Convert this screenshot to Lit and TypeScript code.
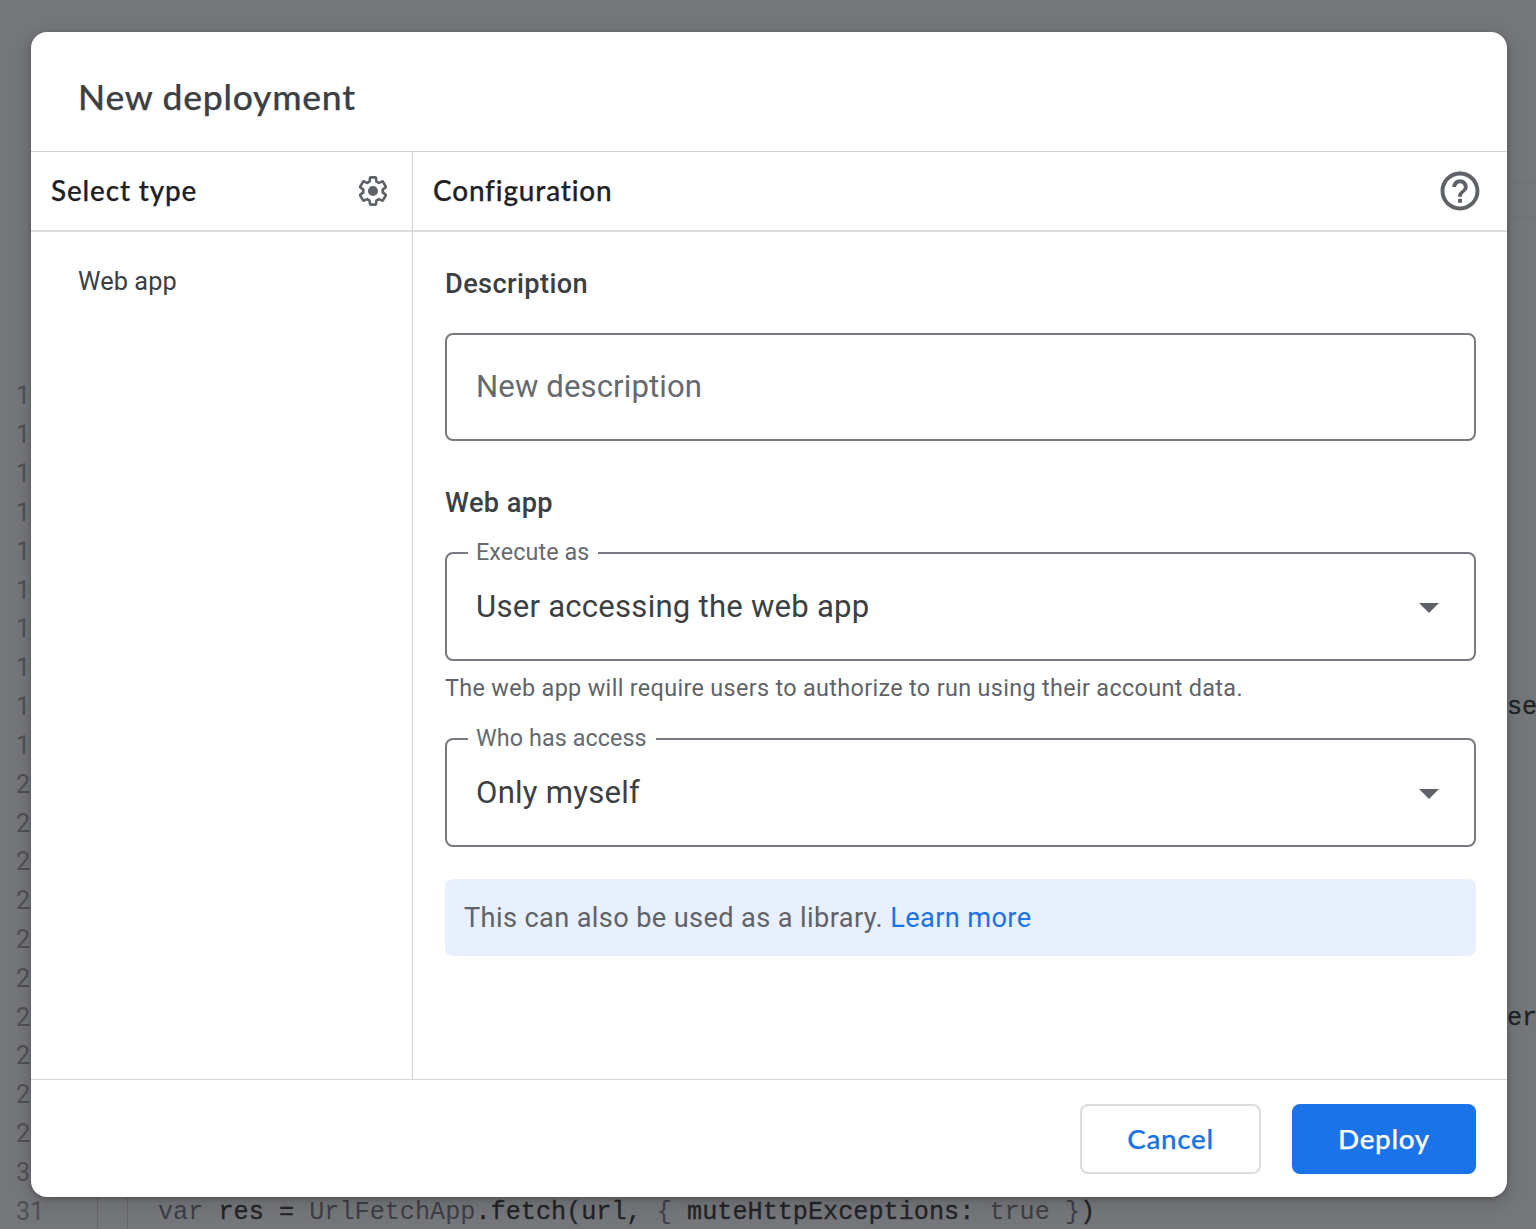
import { LitElement, html, css } from "lit";
import { customElement, property } from "lit/decorators.js";

const LINE_NUMBERS = Array.from({ length: 22 }, (_, i) => 10 + i);

@customElement("code-backdrop")
class CodeBackdrop extends LitElement {
  static styles = css`
    :host { display: block; height: 100%; background: #757679; color: #222327; overflow: hidden; }
    .editor { position: relative; height: 100%; box-sizing: border-box; padding-top: 377.4px; }
    .num { height: 38.84px; line-height: 38.84px; padding-left: 16px; font-family: Roboto, sans-serif; font-size: 25px; color: #4f5054; }
    .line { position: absolute; left: 158px; top: 1193px; white-space: pre; }
    .line, .frag { font-family: "Liberation Mono", monospace; font-size: 25.2px; line-height: 39px; -webkit-text-stroke: 0.3px currentColor; }
    .frag { position: absolute; left: 1507px; }
    .one { top: 688px; }
    .two { top: 999px; }
    .dim { color: #3d3e46; -webkit-text-stroke: 0; }
    .guide { position: absolute; top: 1190px; width: 1px; height: 39px; background: #66676b; }
    .g1 { left: 97px; }
    .g2 { left: 127px; }
    .bar { position: absolute; right: 0; top: 182px; width: 40px; height: 34px; border: solid #707175; border-width: 1px 0; }
  `;
  render() {
    return html`<div class="editor">
      ${LINE_NUMBERS.map((n) => html`<div class="num">${n}</div>`)}
      <div class="bar"></div>
      <div class="guide g1"></div><div class="guide g2"></div>
      <div class="frag one">se</div><div class="frag two">er</div>
      <div class="line"><span class="dim">var</span> res = <span class="dim">UrlFetchApp</span>.fetch(url, <span class="dim">{</span> muteHttpExceptions: <span class="dim">true }</span>)</div>
    </div>`;
  }
}

@customElement("outlined-select")
class OutlinedSelect extends LitElement {
  @property() label = "";
  @property() value = "";
  static styles = css`
    :host { display: block; }
    .box { margin: 0; padding: 0 35px 0 21px; height: 120px; box-sizing: border-box; border: 2px solid #777a80; border-radius: 8px; min-width: 0; }
    .label { padding: 0 9px 0 8px; height: 24px; line-height: 22px; font-size: 23.3px; letter-spacing: 0.1px; color: #66696e; }
    .row { display: flex; align-items: center; justify-content: space-between; height: 83px; padding-left: 8px; }
    .row svg { margin-top: 3px; }
    .value { font-size: 31.1px; line-height: 40px; letter-spacing: 0.24px; color: #3c4043; }
  `;
  render() {
    return html`<fieldset class="box">
      <legend class="label">${this.label}</legend>
      <div class="row"><span class="value">${this.value}</span>
        <svg width="20" height="10" viewBox="0 0 20 10"><path d="M0 0H20L10 10Z" fill="#5f6368"/></svg>
      </div>
    </fieldset>`;
  }
}

@customElement("app-root")
class AppRoot extends LitElement {
  static styles = css`
    :host { display: block; width: 1536px; height: 1229px; position: relative; overflow: hidden; font-family: Roboto, sans-serif; }
    .modal { position: absolute; left: 31px; top: 32px; width: 1476px; height: 1165px; background: #fff; border-radius: 16px; overflow: hidden; display: flex; flex-direction: column; }
    .shadow { position: absolute; left: 31px; top: 32px; width: 1476px; height: 1165px; border-radius: 16px; box-shadow: 0 2px 5px rgba(0,0,0,.2), 0 5px 18px 2px rgba(0,0,0,.13); }
    .g { font-family: "Google Sans", Lato, sans-serif; font-weight: 500; -webkit-text-stroke: 0.25px currentColor; }
    .title { height: 120px; box-sizing: border-box; padding: 41px 0 0 47px; font-size: 35.5px; line-height: 48px; letter-spacing: 0.75px; color: #3c4043; border-bottom: 1px solid #cdd0d5; margin: 0; flex: none; }
    .main { flex: 1; display: flex; min-height: 0; }
    .side { width: 382px; box-sizing: border-box; border-right: 1px solid #cdd0d5; }
    .config { flex: 1; }
    .bar { height: 80px; box-sizing: border-box; border-bottom: 2px solid #dadce0; display: flex; align-items: center; justify-content: space-between; font-size: 27.9px; letter-spacing: 0.85px; color: #202124; }
    .bar span { padding-bottom: 2px; }
    .side .bar { padding: 0 22px 0 20px; }
    .config .bar { padding: 0 27px 0 20px; }
    .item { padding: 34px 0 0 47px; font-size: 25.3px; line-height: 32px; letter-spacing: 0.1px; color: #3c4043; }
    .body { padding: 34px 31px 0 32px; display: flex; flex-direction: column; }
    .head { font-weight: 500; font-size: 27.2px; line-height: 36px; letter-spacing: 0.38px; color: #3c4043; }
    .input { height: 108px; margin: 31px 0 44px; box-sizing: border-box; border: 2px solid #777a80; border-radius: 8px; padding: 0 29px 2px; display: flex; align-items: center; font-size: 31.1px; letter-spacing: 0.12px; color: #66696e; }
    .first { margin-top: 20px; }
    .hint { margin: 11px 0 23px; font-size: 23.4px; line-height: 32px; letter-spacing: 0.33px; color: #5f6368; }
    .note { margin-top: 32px; height: 77px; border-radius: 8px; background: #e8effd; padding: 0 19px; display: flex; align-items: center; font-size: 27.2px; letter-spacing: 0.37px; color: #5f6368; white-space: pre; }
    .link { color: #1a73e8; }
    .foot { height: 118px; flex: none; box-sizing: border-box; border-top: 1px solid #d4d6da; padding: 24px 31px 0 0; display: flex; justify-content: flex-end; gap: 31px; }
    .btn { height: 70px; box-sizing: border-box; border-radius: 8px; display: flex; align-items: center; justify-content: center; font-size: 27.8px; letter-spacing: 0.7px; padding-bottom: 2px; }
    .cancel { width: 181px; border: 2px solid #dadce0; color: #1a73e8; }
    .deploy { width: 184px; background: #1a73e8; color: #fff; }
    svg { display: block; }
  `;
  render() {
    return html`
      <code-backdrop></code-backdrop>
      <div class="shadow"></div>
      <section class="modal">
        <h1 class="title g">New deployment</h1>
        <div class="main">
          <div class="side">
            <div class="bar g"><span>Select type</span>
              <svg width="34" height="34" viewBox="-0.45 -0.45 24.9 24.9" fill="none" stroke="#5f6368" stroke-width="1.95" stroke-linejoin="round">
                <path d="M19.1 12.98c.04-.32.07-.64.07-.98s-.03-.66-.07-.98l2.11-1.65c.19-.15.24-.42.12-.64l-2-3.46c-.12-.22-.39-.3-.61-.22l-2.49 1c-.52-.4-1.08-.73-1.69-.98l-.38-2.65C14.13 2.18 13.92 2 13.67 2h-3.34c-.25 0-.46.18-.49.42l-.38 2.65c-.61.25-1.17.59-1.69.98l-2.49-1c-.23-.09-.49 0-.61.22l-2 3.46c-.13.22-.07.49.12.64l2.11 1.65c-.04.32-.07.65-.07.98s.03.66.07.98l-2.11 1.65c-.19.15-.24.42-.12.64l2 3.46c.12.22.39.3.61.22l2.49-1c.52.4 1.08.73 1.69.98l.38 2.65c.03.24.24.42.49.42h3.34c.25 0 .46-.18.49-.42l.38-2.65c.61-.25 1.17-.59 1.69-.98l2.49 1c.23.09.49 0 .61-.22l2-3.46c.12-.22.07-.49-.12-.64z"/>
                <circle cx="12" cy="12" r="3.7" fill="#5f6368" stroke="none"/>
              </svg>
            </div>
            <div class="item">Web app</div>
          </div>
          <div class="config">
            <div class="bar g"><span>Configuration</span>
              <svg width="40" height="40" viewBox="1.7 1.7 20.6 20.6" fill="#5f6368"><path stroke="none" d="M11 18h2v-2h-2v2zm1-16C6.48 2 2 6.48 2 12s4.48 10 10 10 10-4.48 10-10S17.52 2 12 2zm0 18c-4.41 0-8-3.59-8-8s3.59-8 8-8 8 3.59 8 8-3.59 8-8 8zm0-14c-2.21 0-4 1.79-4 4h2c0-1.1.9-2 2-2s2 .9 2 2c0 2-3 1.75-3 5h2c0-2.25 3-2.5 3-5 0-2.21-1.79-4-4-4z"/></svg>
            </div>
            <div class="body">
              <div class="head">Description</div>
              <div class="input">New description</div>
              <div class="head">Web app</div>
              <outlined-select class="first" label="Execute as" value="User accessing the web app"></outlined-select>
              <div class="hint">The web app will require users to authorize to run using their account data.</div>
              <outlined-select label="Who has access" value="Only myself"></outlined-select>
              <div class="note">This can also be used as a library. <span class="link">Learn more</span></div>
            </div>
          </div>
        </div>
        <div class="foot g"><div class="btn cancel">Cancel</div><div class="btn deploy">Deploy</div></div>
      </section>`;
  }
}
